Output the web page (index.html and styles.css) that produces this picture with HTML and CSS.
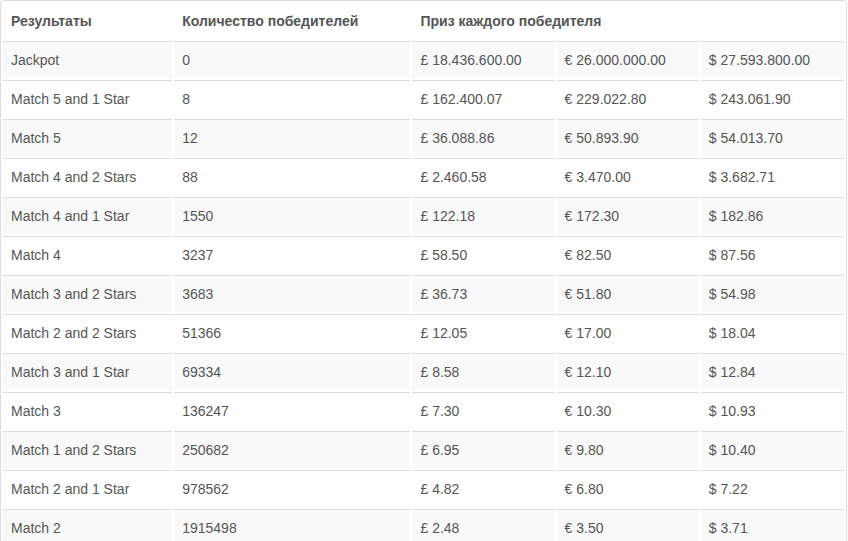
FILE: index.html
```html
<!DOCTYPE html>
<html lang="ru">
<head>
<meta charset="utf-8">
<title>Результаты</title>
<link rel="stylesheet" href="styles.css">
</head>
<body>
<div class="panel">
  <table class="results">
    <colgroup>
      <col class="c1"><col class="c2"><col class="c3"><col class="c4"><col class="c5">
    </colgroup>
    <thead>
      <tr><th>Результаты</th><th>Количество победителей</th><th colspan="3">Приз каждого победителя</th></tr>
    </thead>
    <tbody>
      <tr><td>Jackpot</td><td>0</td><td>£ 18.436.600.00</td><td>€ 26.000.000.00</td><td>$ 27.593.800.00</td></tr>
      <tr><td>Match 5 and 1 Star</td><td>8</td><td>£ 162.400.07</td><td>€ 229.022.80</td><td>$ 243.061.90</td></tr>
      <tr><td>Match 5</td><td>12</td><td>£ 36.088.86</td><td>€ 50.893.90</td><td>$ 54.013.70</td></tr>
      <tr><td>Match 4 and 2 Stars</td><td>88</td><td>£ 2.460.58</td><td>€ 3.470.00</td><td>$ 3.682.71</td></tr>
      <tr><td>Match 4 and 1 Star</td><td>1550</td><td>£ 122.18</td><td>€ 172.30</td><td>$ 182.86</td></tr>
      <tr><td>Match 4</td><td>3237</td><td>£ 58.50</td><td>€ 82.50</td><td>$ 87.56</td></tr>
      <tr><td>Match 3 and 2 Stars</td><td>3683</td><td>£ 36.73</td><td>€ 51.80</td><td>$ 54.98</td></tr>
      <tr><td>Match 2 and 2 Stars</td><td>51366</td><td>£ 12.05</td><td>€ 17.00</td><td>$ 18.04</td></tr>
      <tr><td>Match 3 and 1 Star</td><td>69334</td><td>£ 8.58</td><td>€ 12.10</td><td>$ 12.84</td></tr>
      <tr><td>Match 3</td><td>136247</td><td>£ 7.30</td><td>€ 10.30</td><td>$ 10.93</td></tr>
      <tr><td>Match 1 and 2 Stars</td><td>250682</td><td>£ 6.95</td><td>€ 9.80</td><td>$ 10.40</td></tr>
      <tr><td>Match 2 and 1 Star</td><td>978562</td><td>£ 4.82</td><td>€ 6.80</td><td>$ 7.22</td></tr>
      <tr><td>Match 2</td><td>1915498</td><td>£ 2.48</td><td>€ 3.50</td><td>$ 3.71</td></tr>
    </tbody>
  </table>
</div>
</body>
</html>
```
FILE: styles.css
```css
html, body {
  margin: 0;
  padding: 0;
  background: #fff;
}
body {
  font-family: "Liberation Sans", Arial, sans-serif;
  font-size: 14px;
  line-height: 20px;
  color: #555;
}
.panel {
  width: 845px;
  border: 1px solid #ddd;
  border-radius: 4px;
}
.results {
  border-collapse: separate;
  border-spacing: 2px;
  width: 100%;
  table-layout: fixed;
}
.c1 { width: 169px; }
.c2 { width: 236px; }
.c3 { width: 142px; }
.c4 { width: 142px; }
.c5 { width: 143px; }
.results th,
.results td {
  padding: 8px;
  text-align: left;
  vertical-align: top;
  white-space: nowrap;
}
.results th {
  font-weight: bold;
  color: #555;
}
.results td {
  border-top: 1px solid #ddd;
}
.results tbody tr:nth-child(odd) td {
  background: #f9f9f9;
}
```
